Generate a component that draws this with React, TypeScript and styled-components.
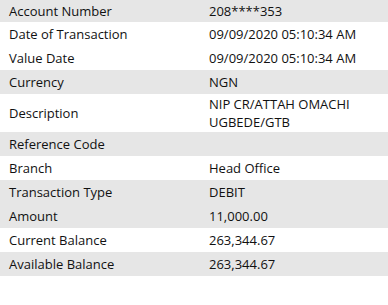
import React from "react";
import styled, { createGlobalStyle } from "styled-components";

const GlobalStyle = createGlobalStyle`
  body {
    margin: 0;
    background: #fff;
    font-family: "Open Sans", "Noto Sans", sans-serif;
    color: #111;
  }
`;

type Row = { label: string; value: string; shaded: boolean };

const rows: Row[] = [
  { label: "Account Number", value: "208****353", shaded: true },
  { label: "Date of Transaction", value: "09/09/2020 05:10:34 AM", shaded: false },
  { label: "Value Date", value: "09/09/2020 05:10:34 AM", shaded: false },
  { label: "Currency", value: "NGN", shaded: true },
  { label: "Description", value: "NIP CR/ATTAH OMACHI UGBEDE/GTB", shaded: false },
  { label: "Reference Code", value: "", shaded: true },
  { label: "Branch", value: "Head Office", shaded: false },
  { label: "Transaction Type", value: "DEBIT", shaded: true },
  { label: "Amount", value: "11,000.00", shaded: true },
  { label: "Current Balance", value: "263,344.67", shaded: false },
  { label: "Available Balance", value: "263,344.67", shaded: true },
];

export default function App() {
  return (
    <>
      <GlobalStyle />
      <DetailsTable>
        {rows.map((r, i) => (
          <DetailRow key={r.label} $shaded={r.shaded} $first={i === 0}>
            <Label>{r.label}</Label>
            <Value>{r.value}</Value>
          </DetailRow>
        ))}
      </DetailsTable>
    </>
  );
}

const DetailsTable = styled.div`
  width: 388px;
  display: flex;
  flex-direction: column;
`;

const DetailRow = styled.div<{ $shaded: boolean; $first: boolean }>`
  display: grid;
  grid-template-columns: 200px 1fr;
  align-items: center;
  min-height: ${(p) => (p.$first ? "22px" : "24px")};
  padding: 1px 0;
  box-sizing: border-box;
  background: ${(p) => (p.$shaded ? "#e6e6e6" : "#fff")};
  font-size: 13px;
  line-height: 18px;
`;

const Label = styled.div`
  padding: 0 9px;
`;

const Value = styled.div`
  padding: 0 9px;
  max-width: 170px;
`;
